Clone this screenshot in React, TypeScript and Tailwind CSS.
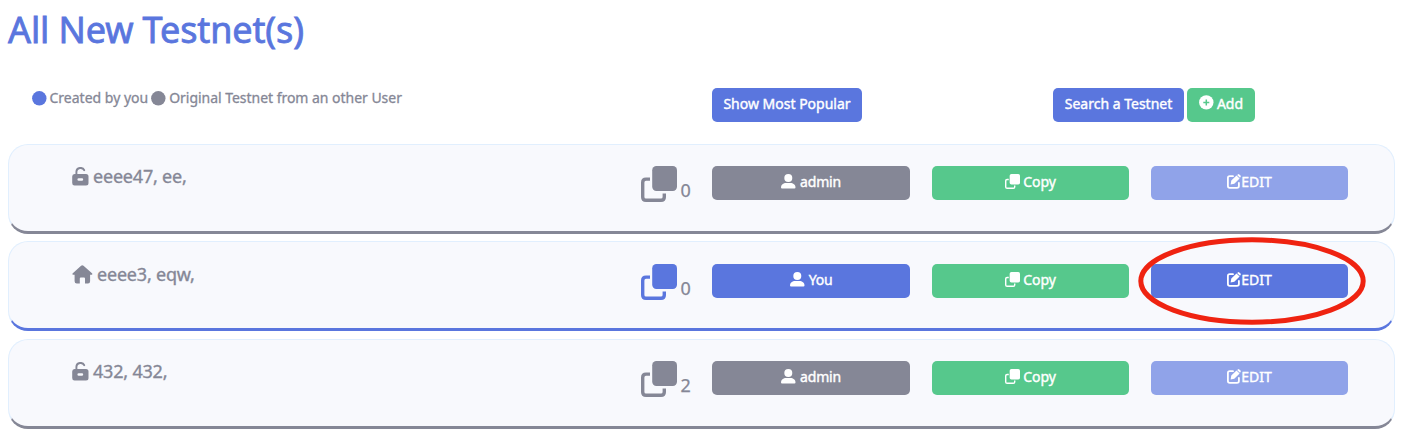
import type { ReactNode } from "react";

const Clone = ({ size }: { size: number }) => (
  <svg width={size} height={size} viewBox="0 0 36 36" className="shrink-0" fill="none">
    <rect x="11.2" y="0" width="24.8" height="25" rx="4.2" fill="currentColor" />
    <path d="M9 13.1H5Q1.7 13.1 1.7 16.4V31Q1.7 34.3 5 34.3H20Q23.3 34.3 23.3 31V27.5" stroke="currentColor" strokeWidth="3.4" />
  </svg>
);

const Unlock = () => (
  <svg width="17" height="19" viewBox="0 0 17 19" className="shrink-0" fill="none">
    <path d="M4.4 8V4.8C4.4 .2 10.8 -.2 12.2 3.2" stroke="currentColor" strokeWidth="1.9" strokeLinecap="round" />
    <path fillRule="evenodd" fill="currentColor" d="M2.6 7H14Q16.5 7 16.5 9.5V16Q16.5 18.5 14 18.5H2.6Q.2 18.5 .2 16V9.5Q.2 7 2.6 7ZM6.8 11.3Q5.4 11.3 5.4 12.5T6.8 13.8H9.8Q11.2 13.8 11.2 12.5T9.8 11.3Z" />
  </svg>
);

const Home = () => (
  <svg width="21" height="19" viewBox="0 0 21 19" className="shrink-0" fill="currentColor">
    <path d="M9.1 .8Q10.3-.2 11.5 .8L20 8.3Q20.8 9.1 20 9.8H18.1V16.2Q18.1 18.4 16 18.4H13V13.5Q13 12.5 12 12.5H8.8Q7.8 12.5 7.8 13.5V18.4H4.8Q2.6 18.4 2.6 16.2V9.8H.9Q0 9.1 .8 8.3Z" />
  </svg>
);

const User = () => (
  <svg width="15" height="15" viewBox="0 0 15 15" className="shrink-0" fill="currentColor">
    <circle cx="7.3" cy="4" r="4" />
    <path d="M0 13.5C0 10.5 2.5 8.9 5 8.9H9.5C12 8.9 14.5 10.5 14.5 13.5Q14.5 14.5 13.5 14.5H1Q0 14.5 0 13.5Z" />
  </svg>
);

const Pen = () => (
  <svg width="14" height="15" viewBox="0 0 14 15" className="shrink-0" fill="none">
    <path d="M6 2.2H2.8Q.9 2.2 .9 4.1V12Q.9 13.9 2.8 13.9H10Q11.9 13.9 11.9 12V9" stroke="currentColor" strokeWidth="1.8" strokeLinecap="round" />
    <path d="M9.5 1.4L12.6 4.5L7.3 9.8L3.6 10.5L4.3 6.6ZM10.1 .9L10.9 .4Q11.6-.2 12.3 .4L13.5 1.6Q14.2 2.3 13.5 3L13 3.8Z" fill="currentColor" />
  </svg>
);

const Plus = () => (
  <svg width="15" height="15" viewBox="0 0 15 15" className="shrink-0">
    <circle cx="7.3" cy="7.4" r="7.2" fill="currentColor" />
    <path d="M7.3 4.4V10.4M4.3 7.4H10.3" stroke="#56c88c" strokeWidth="1.5" />
  </svg>
);

function Button({ className, children }: { className: string; children: ReactNode }) {
  return (
    <button className={`flex h-[34px] items-start justify-center whitespace-nowrap rounded-[5px] pt-[6px] text-sm leading-5 text-white [-webkit-text-stroke:0.4px_currentColor] ${className}`}>
      {children}
    </button>
  );
}

type Row = { name: string; count: number; mine: boolean; spacing: string };

const rows: Row[] = [
  { name: "eeee47, ee,", count: 0, mine: false, spacing: "mb-[7px] pt-[21px]" },
  { name: "eeee3, eqw,", count: 0, mine: true, spacing: "mb-2 pt-[22px]" },
  { name: "432, 432,", count: 2, mine: false, spacing: "pt-[21px]" },
];

function TestnetRow({ name, count, mine, spacing }: Row) {
  return (
    <li className={`flex h-[90px] items-start rounded-[20px] border border-b-[3px] border-[#e1effe] bg-[#f8f9fd] pl-[63px] ${spacing} ${mine ? "border-b-[#5a76de]" : "border-b-[#858796]"}`}>
      <div className="flex w-[568.5px] gap-1 pt-[1px] text-lg leading-[18px] [-webkit-text-stroke:0.35px_currentColor]">
        {mine ? <Home /> : <Unlock />}
        <span className="tracking-[-0.2px]">{name}</span>
      </div>
      <div className="flex w-[71.5px] items-start gap-1">
        <span className={`-mt-[0.5px] ${mine ? "text-[#5a76de]" : ""}`}><Clone size={36} /></span>
        <span className="pt-[12px] text-lg leading-6 [-webkit-text-stroke:0.25px_currentColor]">{count}</span>
      </div>
      <Button className={`mr-[22px] w-[198px] gap-1 ${mine ? "bg-[#5a76de]" : "bg-[#858796]"}`}>
        <span className="pt-[2px]"><User /></span><span className="tracking-[-0.2px]">{mine ? "You" : "admin"}</span>
      </Button>
      <Button className="mr-[22px] w-[197px] gap-[3px] bg-[#56c88c]">
        <span className="pt-[2px]"><Clone size={15} /></span><span className="tracking-[-0.1px]">Copy</span>
      </Button>
      <div className="relative">
        <Button className={`w-[197px] ${mine ? "bg-[#5a76de]" : "bg-[#90a3e9]"}`}>
          <span className="pt-[2px]"><Pen /></span>EDIT
        </Button>
        {mine && (
          <svg className="pointer-events-none absolute -left-[14px] -top-[28px]" width="230" height="90" viewBox="0 0 230 90" fill="none">
            <ellipse cx="115" cy="45" rx="111.2" ry="41.2" stroke="#ef2311" strokeWidth="5" />
          </svg>
        )}
      </div>
    </li>
  );
}

export default function App() {
  return (
    <main className="h-[436px] overflow-hidden bg-white px-2 pr-[10px] font-['Noto_Sans',sans-serif] text-[#858796]">
      <h1 className="h-[88px] pt-[7px] text-[36px] leading-[46px] tracking-[-0.12px] text-[#5a76de] [-webkit-text-stroke:0.8px_currentColor]">All New Testnet(s)</h1>
      <div className="flex h-14 items-start">
        <div className="flex w-[704px] items-center gap-[3px] whitespace-nowrap pl-6 text-sm leading-5 [-webkit-text-stroke:0.3px_currentColor]">
          <svg width="15" height="15" viewBox="0 0 15 15"><circle cx="7.3" cy="7.3" r="7.2" fill="#5a76de" /></svg>
          <span className="-ml-[0.5px]">Created by you</span>
          <svg width="15" height="15" viewBox="0 0 15 15"><circle cx="7.3" cy="7.3" r="7.2" fill="#858796" /></svg>
          <span className="tracking-[-0.03px]">Original Testnet from an other User</span>
        </div>
        <Button className="mr-[191px] w-[150px] bg-[#5a76de]">Show Most Popular</Button>
        <Button className="mr-[3px] w-[131px] bg-[#5a76de]">Search a Testnet</Button>
        <Button className="w-[68px] gap-[3px] bg-[#56c88c]"><span className="pt-[1px]"><Plus /></span>Add</Button>
      </div>
      <ul className="flex flex-col">
        {rows.map((row) => <TestnetRow key={row.name} {...row} />)}
      </ul>
    </main>
  );
}
